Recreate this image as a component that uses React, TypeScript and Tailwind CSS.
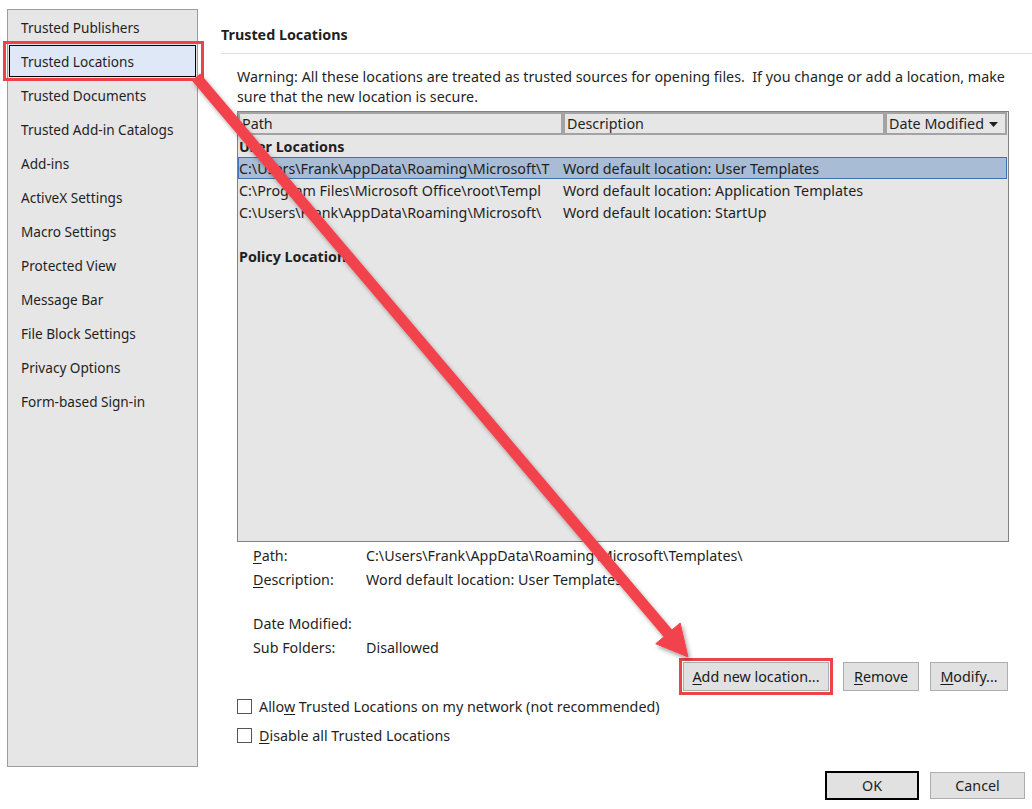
import React from 'react';

const navItems = [
  'Trusted Publishers',
  'Trusted Locations',
  'Trusted Documents',
  'Trusted Add-in Catalogs',
  'Add-ins',
  'ActiveX Settings',
  'Macro Settings',
  'Protected View',
  'Message Bar',
  'File Block Settings',
  'Privacy Options',
  'Form-based Sign-in',
];

const userRows = [
  { path: 'C:\\Users\\Frank\\AppData\\Roaming\\Microsoft\\T', desc: 'Word default location: User Templates', selected: true },
  { path: 'C:\\Program Files\\Microsoft Office\\root\\Templ', desc: 'Word default location: Application Templates', selected: false },
  { path: 'C:\\Users\\Frank\\AppData\\Roaming\\Microsoft\\', desc: 'Word default location: StartUp', selected: false },
];

const btnCls =
  'h-[29px] flex items-center justify-center bg-[#e1e1e1] border border-[#adadad] text-[#1a1a1a] pt-px';

function Arrow() {
  // annotation arrow drawn over the dialog
  const tip = { x: 688, y: 657 };
  const ux = 0.6469;
  const uy = 0.7626;
  const len = 31;
  const half = 16;
  const bx = tip.x - ux * len;
  const by = tip.y - uy * len;
  const c1 = `${bx - uy * half},${by + ux * half}`;
  const c2 = `${bx + uy * half},${by - ux * half}`;
  return (
    <svg className="absolute inset-0 pointer-events-none" width={1032} height={809}>
      <defs>
        <filter id="sh" x="-10%" y="-10%" width="120%" height="120%">
          <feDropShadow dx="2" dy="3" stdDeviation="2" floodColor="#000" floodOpacity="0.35" />
        </filter>
      </defs>
      <g filter="url(#sh)" fill="#f2434b" stroke="#f2434b">
        <line x1={196} y1={77} x2={bx + ux * 2} y2={by + uy * 2} strokeWidth={11} />
        <polygon points={`${tip.x},${tip.y} ${c1} ${c2}`} strokeWidth={1} strokeLinejoin="miter" />
      </g>
    </svg>
  );
}

export default function App() {
  return (
    <div className="relative w-[1032px] h-[809px] bg-white overflow-hidden font-['Segoe_UI','Noto_Sans',sans-serif] text-[14.3px] text-[#1f1f1f]">
      <div className="flex h-full">
        {/* Left category list */}
        <aside className="ml-[7px] mt-[9px] w-[191px] h-[758px] shrink-0 bg-[#e6e6e6] border border-[#9c9c9c] flex flex-col text-[13.6px]">
          {navItems.map((item) =>
            item === 'Trusted Locations' ? (
              <div
                key={item}
                className="relative mx-[1px] my-[1px] h-[32px] flex items-center pl-[11px] pt-[2px] border border-black bg-[#dfe8f6]"
              >
                <div className="absolute -left-[7px] -right-[9px] -top-[5px] -bottom-[5px] border-[3px] border-[#ec434a]" />
                {item}
              </div>
            ) : (
              <div key={item} className="h-[34px] flex items-center pl-[13px] pt-[2px]">
                {item}
              </div>
            )
          )}
        </aside>

        {/* Right pane */}
        <main className="ml-[23px] flex-1 flex flex-col">
          <h2 className="pt-[25px] h-[44px] leading-[20px] font-bold text-[14.3px]">Trusted Locations</h2>
          <div className="mt-[9px] h-px bg-[#e2e2e2]" />

          <p className="mt-[13px] pl-[16px] leading-[20px] whitespace-pre">
            {'Warning: All these locations are treated as trusted sources for opening files.  If you change or add a location, make'}
            <br />
            {'sure that the new location is secure.'}
          </p>

          {/* Locations list */}
          <div className="mt-[4px] ml-[16px] w-[772px] h-[431px] border border-[#828282] bg-[#e6e6e6] flex flex-col">
            <div className="flex h-[23px]">
              <div className="w-[325px] border-2 border-[#a3a3a3] pl-[2px] pt-px flex items-center">Path</div>
              <div className="w-[322px] border-2 border-[#a3a3a3] pl-[2px] pt-px flex items-center">Description</div>
              <div className="w-[122px] border-2 border-[#a3a3a3] pl-[2px] pt-px flex items-center gap-[5px] whitespace-nowrap">
                Date Modified
                <svg width="9" height="5" viewBox="0 0 9 5" className="shrink-0">
                  <path d="M0 0 L9 0 L4.5 5 Z" fill="#1f1f1f" />
                </svg>
              </div>
            </div>
            <div className="h-[22px] flex items-center pl-[1px] pt-px font-bold">User Locations</div>
            {userRows.map((r) => (
              <div
                key={r.desc}
                className={`h-[22px] mr-[1px] flex items-center pt-px whitespace-nowrap ${
                  r.selected ? 'bg-[#a8bcd6] border border-[#3c73b4]' : 'border border-transparent'
                }`}
              >
                <span className="w-[312px] mr-[12px] shrink-0 overflow-hidden">{r.path}</span>
                <span className="shrink-0">{r.desc}</span>
              </div>
            ))}
            <div className="h-[22px]" />
            <div className="h-[22px] flex items-center pl-[1px] pt-px font-bold">Policy Locations</div>
          </div>

          {/* Details */}
          <div className="mt-[1px] pl-[32px] flex flex-col">
            <div className="h-[24px] flex items-center pt-px">
              <span className="w-[113px] shrink-0"><span className="underline underline-offset-2">P</span>ath:</span>
              <span>C:\Users\Frank\AppData\Roaming\Microsoft\Templates\</span>
            </div>
            <div className="h-[24px] flex items-center pt-px">
              <span className="w-[113px] shrink-0"><span className="underline underline-offset-2">D</span>escription:</span>
              <span>Word default location: User Templates</span>
            </div>
            <div className="h-[20px]" />
            <div className="h-[24px] flex items-center pt-px">
              <span className="w-[113px] shrink-0">Date Modified:</span>
            </div>
            <div className="h-[24px] flex items-center pt-px">
              <span className="w-[113px] shrink-0">Sub Folders:</span>
              <span>Disallowed</span>
            </div>
          </div>

          {/* Action buttons */}
          <div className="mt-[3px] pr-[24px] flex justify-end items-center">
            <div className={`relative w-[146px] ${btnCls}`}>
              <div className="absolute -left-[5px] -right-[5px] -top-[5px] -bottom-[5px] border-[3px] border-[#ec434a]" />
              <span><span className="underline underline-offset-2">A</span>dd new location...</span>
            </div>
            <div className={`ml-[14px] w-[76px] ${btnCls}`}>
              <span><span className="underline underline-offset-2">R</span>emove</span>
            </div>
            <div className={`ml-[11px] w-[78px] ${btnCls}`}>
              <span><span className="underline underline-offset-2">M</span>odify...</span>
            </div>
          </div>

          {/* Options */}
          <div className="mt-[4px] pl-[16px] flex flex-col gap-[7px]">
            <label className="h-[22px] flex items-center gap-[7px]">
              <span className="w-[15px] h-[15px] shrink-0 border border-[#555] bg-white" />
              <span className="pt-px">Allo<span className="underline underline-offset-2">w</span> Trusted Locations on my network (not recommended)</span>
            </label>
            <label className="h-[22px] flex items-center gap-[7px]">
              <span className="w-[15px] h-[15px] shrink-0 border border-[#555] bg-white" />
              <span className="pt-px"><span className="underline underline-offset-2">D</span>isable all Trusted Locations</span>
            </label>
          </div>

          {/* Dialog buttons */}
          <div className="mt-[25px] pr-[7px] flex justify-end items-center">
            <div className="w-[94px] h-[29px] flex items-center justify-center pt-px bg-[#e1e1e1] border-2 border-black">OK</div>
            <div className="ml-[11px] w-[95px] h-[27px] flex items-center justify-center pt-px bg-[#e1e1e1] border border-[#adadad]">
              Cancel
            </div>
          </div>
        </main>
      </div>

      <Arrow />
    </div>
  );
}
